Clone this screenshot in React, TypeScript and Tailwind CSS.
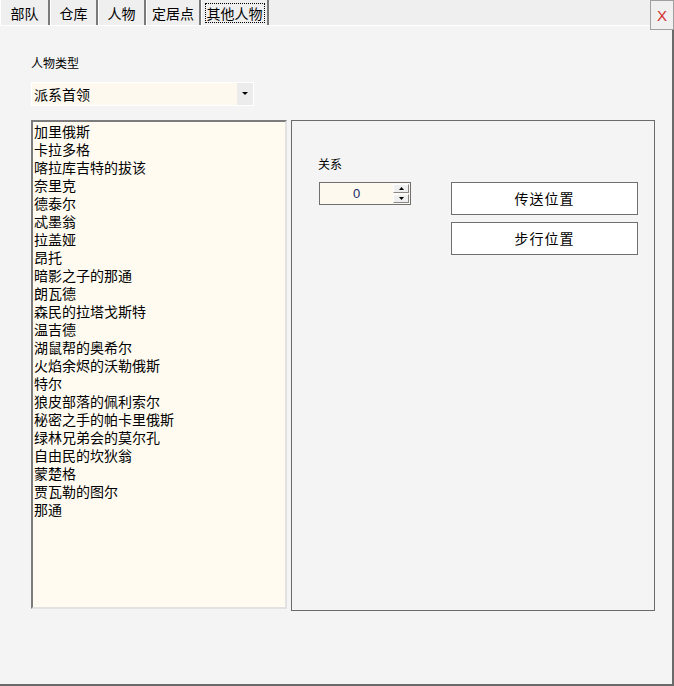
const tabs = [
  { key: "troops", label: "部队", w: "w-[50px]" },
  { key: "storage", label: "仓库", w: "w-[48px]" },
  { key: "people", label: "人物", w: "w-[48px]" },
  { key: "towns", label: "定居点", w: "w-[55px]" },
  { key: "others", label: "其他人物", w: "w-[68px]" },
];

const characters = [
  "加里俄斯",
  "卡拉多格",
  "喀拉库吉特的拔该",
  "奈里克",
  "德泰尔",
  "忒墨翁",
  "拉盖娅",
  "昂托",
  "暗影之子的那通",
  "朗瓦德",
  "森民的拉塔戈斯特",
  "温吉德",
  "湖鼠帮的奥希尔",
  "火焰余烬的沃勒俄斯",
  "特尔",
  "狼皮部落的佩利索尔",
  "秘密之手的帕卡里俄斯",
  "绿林兄弟会的莫尔孔",
  "自由民的坎狄翁",
  "蒙楚格",
  "贾瓦勒的图尔",
  "那通",
];

const font = { fontFamily: '"Noto Sans CJK SC", "Liberation Sans", sans-serif' };

export default function App() {
  return (
    <div
      className="relative w-[674px] h-[686px] bg-[#f4f4f4] text-black overflow-hidden"
      style={font}
    >
      {/* tab strip */}
      <div className="flex h-[26px] bg-[#efefef] border-b border-white">
        {tabs.map((t) => {
          const active = t.key === "others";
          return (
            <div
              key={t.key}
              className={`${t.w} h-[25px] flex items-center justify-center border-l border-white border-r-2 border-r-[#7a7a7a]`}
            >
              <span
                className={`text-[14px] leading-[18px] px-[1px] ${
                  active ? "border border-dotted border-black" : "border border-transparent"
                }`}
              >
                {t.label}
              </span>
            </div>
          );
        })}
      </div>

      {/* close button */}
      <div className="absolute top-0 right-0 w-[24px] h-[30px] bg-[#f0f0f0] border border-[#a0a0a0] flex items-center justify-center">
        <span className="text-[#d42c2c] text-[15px] leading-none" style={{ fontFamily: '"Liberation Sans", sans-serif' }}>
          X
        </span>
      </div>

      {/* body */}
      <div className="h-[660px] border-r-2 border-b-2 border-[#6a6a6a] pl-[31px] pt-[29px]">
        <div className="text-[12px] leading-[16px]">人物类型</div>

        <div className="mt-[11px] flex w-[223px] h-[24px] border border-white">
          <div className="flex-1 bg-[#fdf9ee] text-[14px] leading-[22px] pl-[2px]">派系首领</div>
          <div className="w-[16px] bg-[#ececec] flex items-center justify-center">
            <svg width="6" height="4" viewBox="0 0 6 4">
              <path d="M0 0h6L3 3z" fill="#000" />
            </svg>
          </div>
        </div>

        <div className="mt-[14px] flex gap-[4px]">
          {/* list */}
          <div className="w-[256px] h-[489px] bg-[#fffbf0] border-2 border-t-[#7c7c7c] border-l-[#7c7c7c] border-b-[#e2e2e2] border-r-[#e2e2e2] pl-[1px]">
            {characters.map((c) => (
              <div key={c} className="text-[14px] leading-[18px] whitespace-nowrap">
                {c}
              </div>
            ))}
          </div>

          {/* detail group */}
          <div className="w-[364px] h-[491px] border border-[#6b6b6b] pt-[35px] pl-[26px] flex">
            <div className="w-[133px]">
              <div className="text-[12px] leading-[16px]">关系</div>
              <div className="mt-[10px] w-[92px] h-[23px] ml-[1px] flex border border-[#6f6f6f] bg-[#fdf9ee]">
                <div className="flex-1 flex items-center justify-center text-[13px] text-[#1c2a6a]" style={{ fontFamily: '"Liberation Sans", sans-serif' }}>
                  0
                </div>
                <div className="w-[16px] mr-[1px] flex flex-col justify-center gap-[1px]">
                  <div className="h-[9px] bg-[#efefef] border border-white border-r-[#888] border-b-[#888] flex items-center justify-center">
                    <svg width="5" height="3" viewBox="0 0 5 3">
                      <path d="M0 3h5L2.5 0z" fill="#000" />
                    </svg>
                  </div>
                  <div className="h-[9px] bg-[#efefef] border border-white border-r-[#888] border-b-[#888] flex items-center justify-center">
                    <svg width="5" height="3" viewBox="0 0 5 3">
                      <path d="M0 0h5L2.5 3z" fill="#000" />
                    </svg>
                  </div>
                </div>
              </div>
            </div>

            <div className="pt-[26px] flex flex-col gap-[7px]">
              {["传送位置", "步行位置"].map((b) => (
                <div
                  key={b}
                  className="w-[187px] h-[33px] bg-white border border-[#6f6f6f] flex items-center justify-center text-[14px] tracking-[1px]"
                >
                  {b}
                </div>
              ))}
            </div>
          </div>
        </div>
      </div>
    </div>
  );
}
